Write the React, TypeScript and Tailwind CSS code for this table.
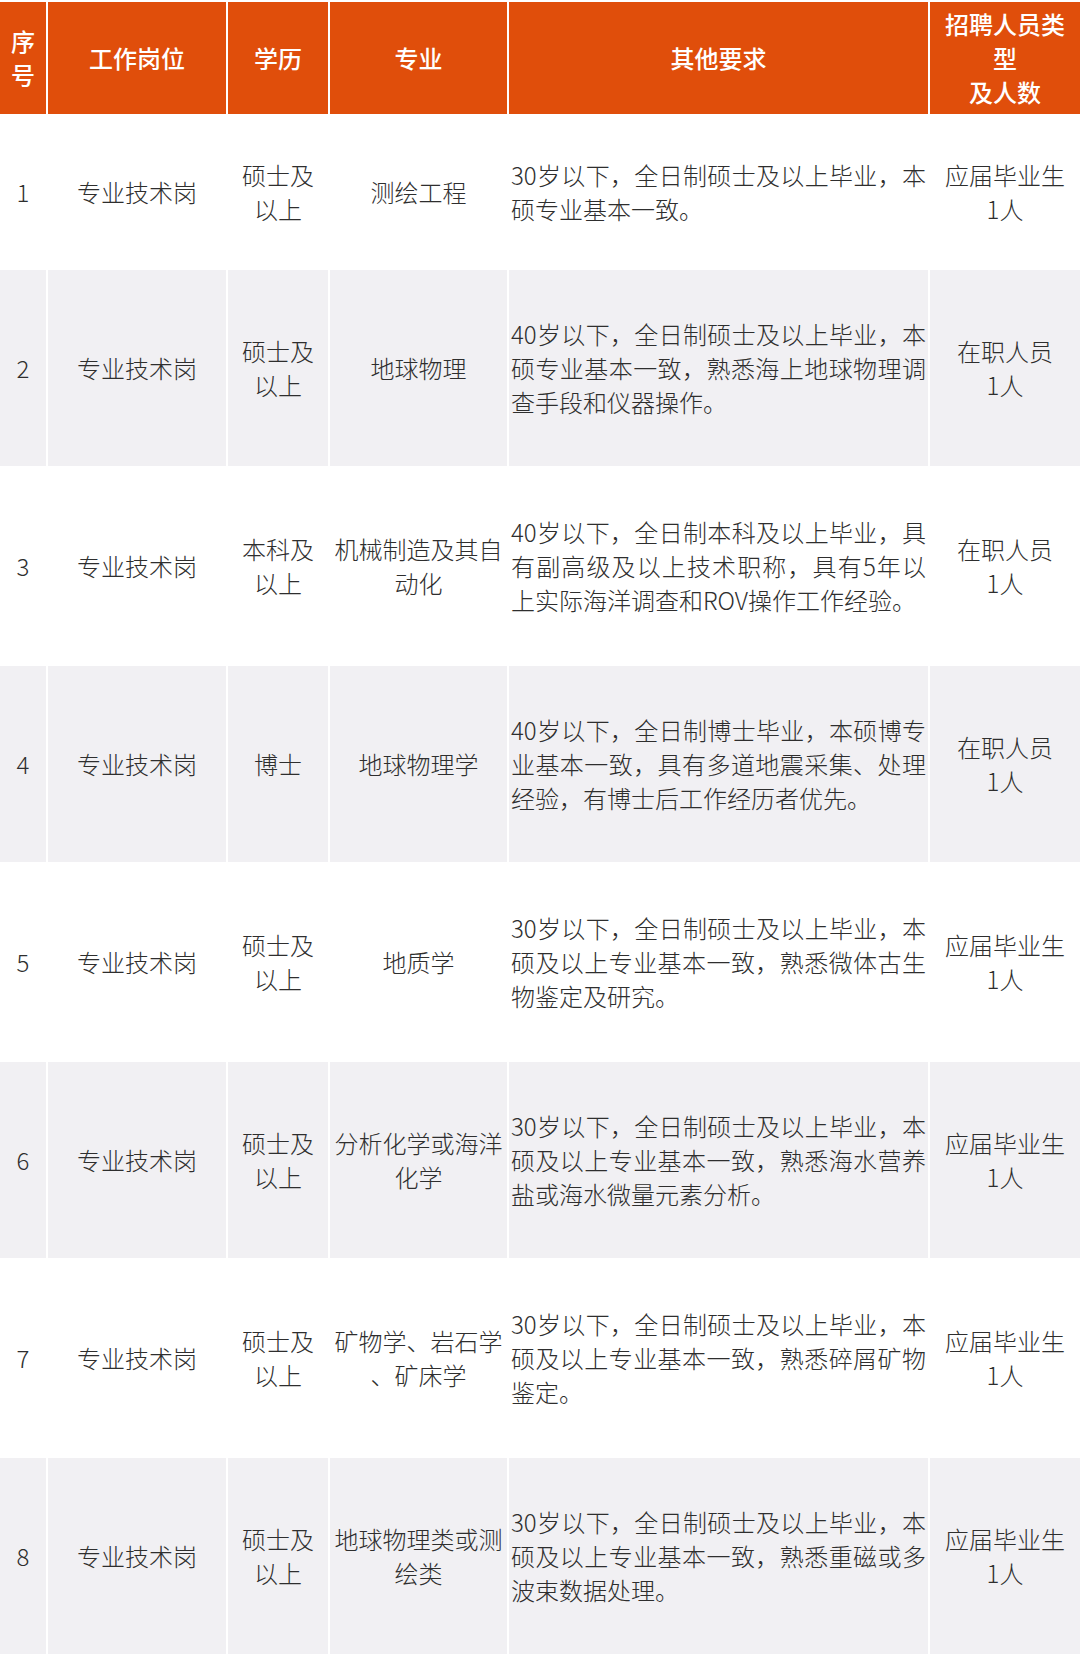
import React from "react";

const rows = [
  {
    no: "1",
    edu: ["硕士及", "以上"],
    major: ["测绘工程"],
    req: ["30岁以下，全日制硕士及以上毕业，本", "硕专业基本一致。"],
    type: ["应届毕业生", "1人"],
  },
  {
    no: "2",
    edu: ["硕士及", "以上"],
    major: ["地球物理"],
    req: ["40岁以下，全日制硕士及以上毕业，本", "硕专业基本一致，熟悉海上地球物理调", "查手段和仪器操作。"],
    type: ["在职人员", "1人"],
  },
  {
    no: "3",
    edu: ["本科及", "以上"],
    major: ["机械制造及其自", "动化"],
    req: ["40岁以下，全日制本科及以上毕业，具", "有副高级及以上技术职称，具有5年以", "上实际海洋调查和ROV操作工作经验。"],
    type: ["在职人员", "1人"],
  },
  {
    no: "4",
    edu: ["博士"],
    major: ["地球物理学"],
    req: ["40岁以下，全日制博士毕业，本硕博专", "业基本一致，具有多道地震采集、处理", "经验，有博士后工作经历者优先。"],
    type: ["在职人员", "1人"],
  },
  {
    no: "5",
    edu: ["硕士及", "以上"],
    major: ["地质学"],
    req: ["30岁以下，全日制硕士及以上毕业，本", "硕及以上专业基本一致，熟悉微体古生", "物鉴定及研究。"],
    type: ["应届毕业生", "1人"],
  },
  {
    no: "6",
    edu: ["硕士及", "以上"],
    major: ["分析化学或海洋", "化学"],
    req: ["30岁以下，全日制硕士及以上毕业，本", "硕及以上专业基本一致，熟悉海水营养", "盐或海水微量元素分析。"],
    type: ["应届毕业生", "1人"],
  },
  {
    no: "7",
    edu: ["硕士及", "以上"],
    major: ["矿物学、岩石学", "、矿床学"],
    req: ["30岁以下，全日制硕士及以上毕业，本", "硕及以上专业基本一致，熟悉碎屑矿物", "鉴定。"],
    type: ["应届毕业生", "1人"],
  },
  {
    no: "8",
    edu: ["硕士及", "以上"],
    major: ["地球物理类或测", "绘类"],
    req: ["30岁以下，全日制硕士及以上毕业，本", "硕及以上专业基本一致，熟悉重磁或多", "波束数据处理。"],
    type: ["应届毕业生", "1人"],
  },
];

const cols = "grid grid-cols-[46px_178px_100px_177px_419px_150px] gap-x-[2px]";

const Lines = ({ lines }: { lines: string[] }) => (
  <div className="text-center">
    {lines.map((l, i) => (
      <div key={i} className="whitespace-nowrap">
        {l}
      </div>
    ))}
  </div>
);

export default function App() {
  return (
    <div
      className="w-[1080px] h-[1654px] overflow-hidden bg-white pt-[2px] flex flex-col gap-y-[2px] text-[24px] leading-[34px] text-[#2e2e2e]"
      style={{ fontFamily: '"Noto Sans CJK SC", "Noto Sans", sans-serif' }}
    >
      {/* header */}
      <div className={`${cols} h-[112px] shrink-0 text-white font-medium`}>
        <div className="bg-[#e04e0b] flex items-center justify-center">
          <Lines lines={["序", "号"]} />
        </div>
        <div className="bg-[#e04e0b] flex items-center justify-center">工作岗位</div>
        <div className="bg-[#e04e0b] flex items-center justify-center">学历</div>
        <div className="bg-[#e04e0b] flex items-center justify-center">专业</div>
        <div className="bg-[#e04e0b] flex items-center justify-center">其他要求</div>
        <div className="bg-[#e04e0b] flex items-center justify-center">
          <Lines lines={["招聘人员类", "型", "及人数"]} />
        </div>
      </div>

      {rows.map((r, idx) => {
        const bg = idx % 2 === 1 ? "bg-[#f1f0f3]" : "bg-white";
        const h = idx === 0 ? "h-[152px]" : "h-[196px]";
        return (
          <div key={r.no} className={`${cols} ${h} shrink-0 font-light`}>
            <div className={`${bg} flex items-center justify-center`}>{r.no}</div>
            <div className={`${bg} flex items-center justify-center`}>专业技术岗</div>
            <div className={`${bg} flex items-center justify-center`}>
              <Lines lines={r.edu} />
            </div>
            <div className={`${bg} flex items-center justify-center`}>
              <Lines lines={r.major} />
            </div>
            <div className={`${bg} flex items-center pl-[2px] pr-[2px]`}>
              <div className="w-full">
                {r.req.map((l, i) => (
                  <div
                    key={i}
                    className={
                      i < r.req.length - 1
                        ? "whitespace-nowrap text-justify [text-align-last:justify]"
                        : "whitespace-nowrap text-left"
                    }
                  >
                    {l}
                  </div>
                ))}
              </div>
            </div>
            <div className={`${bg} flex items-center justify-center`}>
              <Lines lines={r.type} />
            </div>
          </div>
        );
      })}
    </div>
  );
}
